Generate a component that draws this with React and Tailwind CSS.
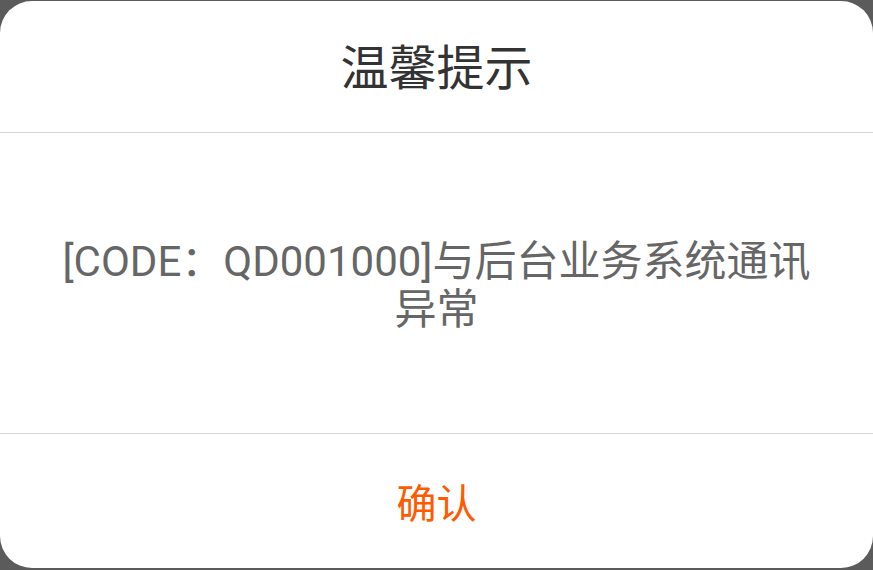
import React from 'react';

export default function App() {
    const font = { fontFamily: 'Roboto, "Noto Sans CJK SC", sans-serif' };

    return (
        <div className="w-[873px] h-[570px] bg-[#5b5b5b] overflow-hidden pt-[1px]" style={font}>
            {/* Dialog */}
            <div className="h-[567px] bg-white rounded-[32px] flex flex-col">
                <div className="h-[131px] pt-[5px] flex items-center justify-center text-[48px] text-[#333333]">
                    温馨提示
                </div>
                <div className="h-px bg-[#d6d6d6]" />
                <div className="h-[300px] pt-[6px] flex items-center justify-center px-[50px] text-center text-[42px] leading-[48px] text-[#666666]">
                    [CODE：QD001000]与后台业务系统通讯异常
                </div>
                <div className="h-px bg-[#d6d6d6]" />
                <button className="flex-1 pt-[8px] flex items-center justify-center text-[40px] text-[#ff5a00]">
                    确认
                </button>
            </div>
        </div>
    );
}
